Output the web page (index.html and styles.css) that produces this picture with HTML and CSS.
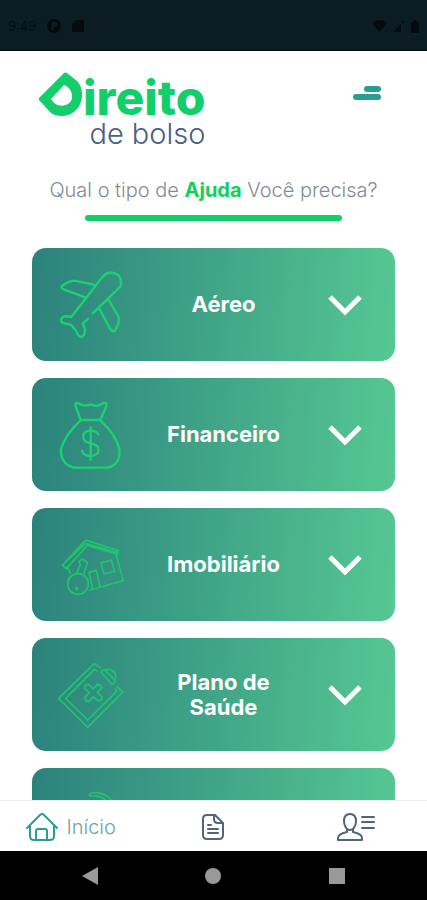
FILE: index.html
```html
<!DOCTYPE html>
<html lang="pt-BR">

<head>
    <meta charset="UTF-8">
    <meta name="viewport" content="width=device-width, initial-scale=1.0">
    <title>Direito de bolso</title>
    <link rel="stylesheet" href="styles.css">
</head>

<body>

    <!-- Status bar -->
    <div class="status-bar">
        <div class="status-group">
            <span class="status-time">9:49</span>
            <svg width="14" height="14" viewBox="0 0 14 14"><path fill-rule="evenodd" d="M7 0a7 7 0 1 0 0 14A7 7 0 0 0 7 0zM5 3h4a3 3 0 0 1 0 5H7v3H4z"/></svg>
            <svg width="12" height="14" viewBox="0 0 12 14"><path d="M4 1h8v12H0V5z"/></svg>
        </div>
        <div class="status-group status-right">
            <svg width="15" height="12" viewBox="0 0 15 12"><path d="M0 3Q7.500-3 15 3L7.500 12z"/></svg>
            <svg width="12" height="12" viewBox="0 0 12 12"><path d="M0 12L8 4v8zM9 1h2v2H9z"/></svg>
            <svg width="8" height="13" viewBox="0 0 8 13"><path d="M2 0h4v2h2v11H0V2h2z"/></svg>
        </div>
    </div>

    <main class="content">
        <header class="header">
            <div class="logo">
                <div class="logo-top">
                    <svg class="logo-mark" viewBox="39 72 44 44" aria-hidden="true">
                        <path fill-rule="evenodd" d="M67 73L77 81Q82 86 82 95C82 107 73 116 62 116Q54 116 50 112L39 100Q38 99 39 98L64 73Q65.500 72 67 73zM64 85L51 99L54 103C62 109 73 104 72 96C72 91 69 87 64 85z"/>
                    </svg>
                    <span class="logo-name">ireito</span>
                </div>
                <span class="logo-sub">de bolso</span>
            </div>
            <button type="button" class="menu-button" aria-label="Menu">
                <svg width="28" height="16" viewBox="0 0 28 16"><rect x="11" y="1" width="17" height="6" rx="3"/><rect x="0" y="9" width="28" height="6" rx="3"/></svg>
            </button>
        </header>

        <h1 class="question">Qual o tipo de <strong>Ajuda</strong> Você precisa?</h1>
        <div class="divider"></div>

        <!-- Categories -->
        <div class="cards">
            <button type="button" class="card">
                <svg class="card-icon" viewBox="99 86 198 210">
                    <path d="M190 232L173 246L180 264Q180 286 168 287Q160 286 153 268L139 251L112 244Q104 237 113 228Q122 222 139 227L234 105C247 91 269 91 281 103Q292 117 286 136L259 162L203 216M206 130L148 118Q132 119 111 134Q107 141 116 144L181 168M249 172L281 227L281 243Q277 258 269 269Q262 272 255 262L222 200"/>
                </svg>
                <span class="card-label">Aéreo</span>
                <svg class="card-arrow" viewBox="0 0 44 24"><path d="M7 4L22 19L37 4"/></svg>
            </button>
            <button type="button" class="card">
                <svg class="card-icon" viewBox="99 87 198 210">
                    <path d="M167 147L152 105Q149 95 158 96Q177 109 197 100Q218 110 235 96Q248 94 244 106L226 147zM167 148Q119 192 108 235Q106 278 146 290H248Q288 279 283 235Q274 191 226 148M197 169V266M220 190Q214 179 197 179C168 180 166 211 197 217C230 222 228 252 197 255Q174 254 171 239"/>
                </svg>
                <span class="card-label">Financeiro</span>
                <svg class="card-arrow" viewBox="0 0 44 24"><path d="M7 4L22 19L37 4"/></svg>
            </button>
            <button type="button" class="card">
                <svg class="card-icon thin" viewBox="99 89 198 210">
                    <path d="M112 195L179 122L184 120L280 151L277 162L187 135L124 205L112 195L181 129L278 157M126 198L136 219M273 162L295 241L195 269M228 188L259 179L269 213L237 221zM202 263L192 216L214 210L225 259M156 218L166 192L162 183L173 176L187 187L177 219"/>
                    <circle cx="159" cy="251" r="31"/>
                    <path d="M155 260V268M151 264H159"/>
                </svg>
                <span class="card-label">Imobiliário</span>
                <svg class="card-arrow" viewBox="0 0 44 24"><path d="M7 4L22 19L37 4"/></svg>
            </button>
            <button type="button" class="card">
                <svg class="card-icon thin" viewBox="99 90 198 210">
                    <path d="M226 113L208 101L101 205L188 292L293 187L277 170M217 123L208 118L122 205L188 270L275 184L271 177M228 126Q234 116 243 123L270 151Q273 156 261 164zM239 121C242 116 265 118 269 129Q275 138 270 148M205 177L217 163Q227 163 231 173L217 187L232 202Q232 211 220 213L205 200L192 214Q181 215 179 202L193 188L179 175Q178 164 191 163z"/>
                </svg>
                <span class="card-label">Plano de Saúde</span>
                <svg class="card-arrow" viewBox="0 0 44 24"><path d="M7 4L22 19L37 4"/></svg>
            </button>
            <button type="button" class="card">
                <svg class="card-icon thin" viewBox="99 92 198 210">
                    <path d="M260 123Q241 100 211 100C189 99 189 113 203 110Q222 108 238 119L252 140L222 190H130V270H250V150"/>
                </svg>
                <svg class="card-arrow" viewBox="0 0 44 24"><path d="M7 4L22 19L37 4"/></svg>
            </button>
        </div>
    </main>

    <!-- App tabs -->
    <nav class="tabs">
        <a href="#" class="tab active">
            <svg width="32" height="28" viewBox="0 0 32 28"><path d="M1 15L14 2Q16 0 18 2L31 15M4 13V23Q4 27 8 27H24Q28 27 28 23V13M10 27V18Q10 16 12 16H19Q21 16 21 18V27"/></svg>
            <span>Início</span>
        </a>
        <a href="#" class="tab" aria-label="Documentos">
            <svg width="22" height="26" viewBox="0 0 22 26"><path d="M13 1H5Q1 1 1 5V21Q1 25 5 25H17Q21 25 21 21V9zM12 1V5Q12 9 16 9H21M6 11H9M6 15H16M6 19H16"/></svg>
        </a>
        <a href="#" class="tab" aria-label="Perfil">
            <svg width="38" height="28" viewBox="0 0 38 28"><path d="M13 1C9 1 7 4 7 8C7 12 9 17 13 17C17 17 19 12 19 8C19 4 17 1 13 1zM10 16V19Q1 21 1 25V27H25V25Q25 21 16 19V16M25 4H37M25 9H37M25 15H37"/></svg>
        </a>
    </nav>

    <!-- System buttons -->
    <div class="system-bar">
        <button type="button" aria-label="Voltar"><svg width="16" height="18" viewBox="0 0 16 18"><path d="M0 9L16 0V18z"/></svg></button>
        <button type="button" aria-label="Tela inicial"><svg width="16" height="16" viewBox="0 0 16 16"><circle cx="8" cy="8" r="8"/></svg></button>
        <button type="button" aria-label="Recentes"><svg width="16" height="16" viewBox="0 0 16 16"><rect width="16" height="16"/></svg></button>
    </div>

</body>

</html>
```

FILE: styles.css
```css
/* General Styles */
* {
    margin: 0;
    padding: 0;
    box-sizing: border-box;
}

body {
    display: flex;
    flex-direction: column;
    height: 100vh;
    background-color: #fff;
    font-family: Inter, "Open Sans", sans-serif;
}

button {
    border: none;
    background: none;
    font-family: inherit;
    cursor: pointer;
}

svg {
    display: block;
    flex-shrink: 0;
}

/* Status bar */
.status-bar {
    display: flex;
    justify-content: space-between;
    align-items: center;
    flex-shrink: 0;
    height: 51px;
    padding: 2px 8px 0;
    background-color: #0b1c23;
    border-bottom: 1px solid #020a0d;
    color: #030d11;
    fill: #030b0e;
}

.status-group {
    display: flex;
    align-items: center;
    gap: 11px;
}

.status-right {
    gap: 6px;
}

.status-time {
    font-size: 13px;
}

/* Content */
.content {
    flex: 1;
    min-height: 0;
    overflow-y: auto;
    scrollbar-width: none;
}

.header {
    display: flex;
    justify-content: space-between;
    align-items: flex-start;
    padding: 21px 46px 0 39px;
}

.logo {
    display: flex;
    flex-direction: column;
    align-items: flex-end;
}

.logo-top {
    display: flex;
}

.logo-mark {
    width: 44px;
    height: 44px;
    fill: #12cf6b;
}

.logo-name {
    color: #12cf6b;
    font-size: 48px;
    font-weight: 800;
    line-height: 52px;
}

.logo-sub {
    color: #4a6280;
    font-size: 29px;
    font-weight: 300;
    line-height: 20px;
}

.menu-button {
    margin-top: 13px;
    fill: #2a9d94;
}

.question {
    margin-top: 34px;
    color: #858b95;
    font-size: 20px;
    font-weight: 300;
    line-height: 24px;
    text-align: center;
}

.question strong {
    color: #12cf5b;
    font-weight: 700;
}

.divider {
    width: 60%;
    height: 6px;
    margin: 13px auto 0;
    border-radius: 3px;
    background-color: #12cf6b;
}

/* Cards */
.cards {
    display: flex;
    flex-direction: column;
    gap: 17px;
    padding: 27px 32px 16px;
}

.card {
    display: flex;
    justify-content: space-between;
    align-items: center;
    flex-shrink: 0;
    height: 113px;
    padding: 0 28px 0 26px;
    border-radius: 14px;
    background: linear-gradient(95deg, #2b827c, #56c893);
}

.card-icon {
    width: 66px;
    height: 70px;
    fill: none;
    stroke: #1bd273;
    stroke-width: 7;
    stroke-linecap: round;
    stroke-linejoin: round;
}

.card-icon.thin {
    stroke: #1fc46e;
    stroke-width: 5;
}

.card-label {
    flex: 1;
    padding: 0 32px;
    color: #fff;
    font-size: 22px;
    font-weight: 700;
    line-height: 25px;
    text-align: center;
}

.card-arrow {
    width: 44px;
    height: 24px;
    fill: none;
    stroke: #fff;
    stroke-width: 5;
}

/* Bottom tabs */
.tabs {
    display: grid;
    grid-template-columns: repeat(3, 1fr);
    flex-shrink: 0;
    height: 51px;
    border-top: 1px solid #ececec;
    background-color: #fff;
}

.tab {
    display: flex;
    justify-content: center;
    align-items: center;
    gap: 8px;
    padding-top: 2px;
    color: #65a999;
    font-size: 20px;
    font-weight: 300;
    text-decoration: none;
}

.tab svg {
    fill: none;
    stroke: #52647c;
    stroke-width: 2;
    stroke-linecap: round;
    stroke-linejoin: round;
}

.tab.active svg {
    stroke: #2a9d94;
}

/* System bar */
.system-bar {
    display: flex;
    justify-content: space-around;
    align-items: center;
    flex-shrink: 0;
    height: 49px;
    padding: 0 28px;
    background-color: #000;
}

.system-bar button {
    padding: 8px;
}

.system-bar svg {
    fill: #999;
}
```
